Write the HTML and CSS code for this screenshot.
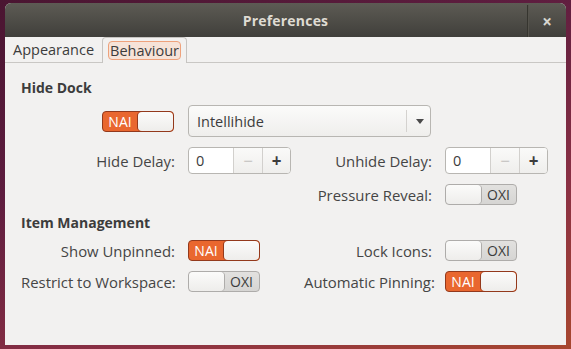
FILE: index.html
```html
<!DOCTYPE html>
<html lang="en">
<head>
    <meta charset="UTF-8">
    <title>Preferences</title>
    <link rel="stylesheet" href="styles.css">
</head>
<body>
    <div class="window">
        <div class="titlebar">
            <span class="title">Preferences</span>
            <span class="close">&times;</span>
        </div>
        <div class="tabs">
            <div class="tab">Appearance</div>
            <div class="tab active"><span class="tab-focus">Behaviour</span></div>
        </div>
        <div class="content">
            <h3>Hide Dock</h3>
            <div class="grid">
                <div class="switch on col1 row-tall"><span class="state">NAI</span><span class="knob"></span></div>
                <div class="combo">
                    <span>Intellihide</span>
                    <span class="combo-arrow"></span>
                </div>

                <label class="col1">Hide Delay:</label>
                <div class="spin">
                    <span class="spin-value">0</span>
                    <span class="spin-btn disabled">&minus;</span>
                    <span class="spin-btn">+</span>
                </div>
                <label>Unhide Delay:</label>
                <div class="spin">
                    <span class="spin-value">0</span>
                    <span class="spin-btn disabled">&minus;</span>
                    <span class="spin-btn">+</span>
                </div>

                <label class="col3">Pressure Reveal:</label>
                <div class="switch off"><span class="knob"></span><span class="state">OXI</span></div>
            </div>

            <h3 class="second">Item Management</h3>
            <div class="grid">
                <label>Show Unpinned:</label>
                <div class="switch on"><span class="state">NAI</span><span class="knob"></span></div>
                <label>Lock Icons:</label>
                <div class="switch off"><span class="knob"></span><span class="state">OXI</span></div>

                <label>Restrict to Workspace:</label>
                <div class="switch off"><span class="knob"></span><span class="state">OXI</span></div>
                <label>Automatic Pinning:</label>
                <div class="switch on"><span class="state">NAI</span><span class="knob"></span></div>
            </div>
        </div>
    </div>
</body>
</html>
```

FILE: styles.css
```css
* {
    box-sizing: border-box;
    margin: 0;
    padding: 0;
}

body {
    width: 571px;
    height: 349px;
    overflow: hidden;
    font-family: 'Open Sans', 'DejaVu Sans', sans-serif;
    font-size: 14.5px;
    color: #454545;
    background: linear-gradient(160deg, #4a1531 0%, #5e1d3f 35%, #8a3044 70%, #a8472f 100%);
    padding: 3px 5px 0 5px;
}

.window {
    width: 561px;
    height: 342px;
    background-color: #f2f1f0;
    border-radius: 6px 6px 0 0;
    overflow: hidden;
}

.titlebar {
    height: 34px;
    background: linear-gradient(to bottom, #5d5b54, #403f3b);
    display: flex;
    align-items: center;
    justify-content: center;
    position: relative;
}

.title {
    color: #dfdbd2;
    font-weight: bold;
    font-size: 14px;
    letter-spacing: 0.2px;
}

.close {
    position: absolute;
    right: 0;
    top: 2px;
    width: 39px;
    height: 32px;
    border-left: 1px solid #36352f;
    box-shadow: inset 1px 0 0 #55534c;
    color: #d8d6d0;
    font-weight: bold;
    font-size: 17px;
    display: flex;
    align-items: center;
    justify-content: center;
}

.tabs {
    height: 26px;
    display: flex;
    align-items: flex-end;
    border-bottom: 1px solid #c9c7c4;
}

.tab {
    height: 25px;
    display: flex;
    align-items: center;
    padding: 0 8px;
    color: #3c3c3c;
}

.tab.active {
    border: 1px solid #c6c4c1;
    border-bottom: none;
    border-radius: 4px 4px 0 0;
    background-color: #f2f1f0;
    margin-bottom: -1px;
    height: 26px;
    padding: 0 5px;
}

.tab-focus {
    border: 1px solid #eea27c;
    background-color: #f6e3d8;
    border-radius: 4px;
    padding: 0 1px;
    line-height: 17px;
}

.content {
    padding: 15px 18px 0 16px;
}

h3 {
    font-size: 14px;
    font-weight: bold;
    line-height: 20px;
    color: #3c3c3c;
    margin-bottom: 7px;
}

h3.second {
    margin-top: 8px;
}

.grid {
    display: grid;
    grid-template-columns: 154px 103px 128px 103px;
    column-gap: 13px;
    row-gap: 10px;
    align-items: center;
}

.grid label {
    text-align: right;
    white-space: nowrap;
    font-size: 14.9px;
}

.col1 {
    grid-column: 1;
}

.col3 {
    grid-column: 3;
}

.row-tall {
    justify-self: end;
    margin-right: 1px;
}

.combo {
    grid-column: 2 / 4;
    height: 32px;
    margin-right: 1px;
    border: 1px solid #b8b6b2;
    border-radius: 4px;
    background: linear-gradient(to bottom, #fbfbfa, #efeeec);
    display: flex;
    align-items: center;
    padding-left: 8px;
    color: #3c3c3c;
}

.combo span:first-child {
    flex: 1;
}

.combo-arrow {
    width: 24px;
    height: 22px;
    border-left: 1px solid #d4d2cf;
    display: flex;
    align-items: center;
    justify-content: center;
}

.combo-arrow::after {
    content: "";
    border-left: 4px solid transparent;
    border-right: 4px solid transparent;
    border-top: 5px solid #4a4a4a;
    margin-left: 2px;
}

.spin {
    height: 27px;
    border: 1px solid #b8b6b2;
    border-radius: 4px;
    background-color: #ffffff;
    display: flex;
    align-items: stretch;
    overflow: hidden;
}

.spin-value {
    flex: 1;
    padding-left: 7px;
    display: flex;
    align-items: center;
    color: #3c3c3c;
}

.spin-btn {
    width: 29px;
    border-left: 1px solid #d2d0cd;
    background: linear-gradient(to bottom, #fafaf9, #efeeec);
    display: flex;
    align-items: center;
    justify-content: center;
    font-size: 17px;
    font-weight: bold;
    color: #3c3c3c;
}

.spin-btn:last-child {
    width: 28px;
}

.spin-btn.disabled {
    color: #c2c0bd;
    font-weight: normal;
}

.switch {
    width: 72px;
    height: 21px;
    border-radius: 4px;
    display: flex;
    align-items: stretch;
    overflow: hidden;
}

.switch .state {
    flex: 1;
    display: flex;
    align-items: center;
    justify-content: center;
    font-size: 14px;
}

.switch .knob {
    width: 35px;
    border-radius: 4px;
    background: linear-gradient(to bottom, #fbfbfa, #eeedeb);
}

.switch.on {
    background-color: #e9672f;
    border: 1px solid #93391c;
}

.switch.on .state {
    color: #ffffff;
    padding-right: 1px;
}

.switch.on .knob {
    box-shadow: -1px 0 0 #93391c;
}

.switch.off {
    background: linear-gradient(to bottom, #e2e1df, #d6d5d3);
    border: 1px solid #aeacaa;
}

.switch.off .state {
    color: #3c3c3c;
}

.switch.off .knob {
    box-shadow: 1px 0 0 #aeacaa;
}
```
